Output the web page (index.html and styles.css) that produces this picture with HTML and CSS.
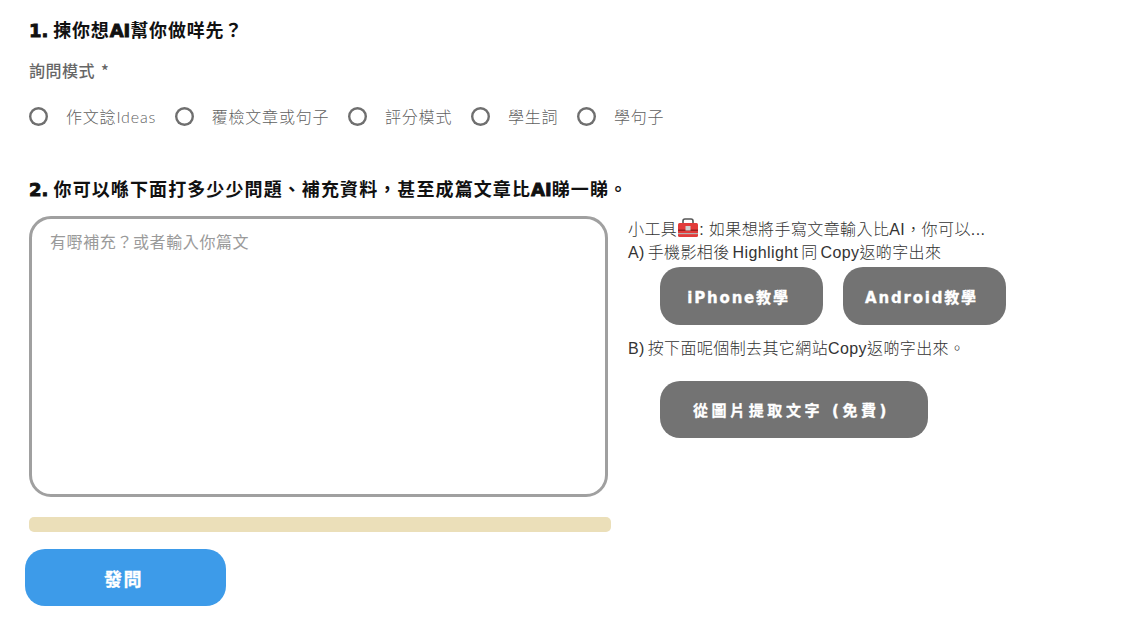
FILE: index.html
```html
<!DOCTYPE html>
<html lang="zh-Hant">

<head>
    <meta charset="UTF-8">
    <meta name="viewport" content="width=device-width, initial-scale=1.0">
    <title>AI</title>
    <link rel="stylesheet" href="styles.css">
</head>

<body>

    <div class="page">
        <h2 class="step step-one"><span class="latin">1.</span> 揀你想<span class="latin">AI</span>幫你做咩先？</h2>
        <p class="field-label">詢問模式 <span class="star">*</span></p>

        <div class="radio-row">
            <label class="radio"><span class="dot"></span>作文諗Ideas</label>
            <label class="radio"><span class="dot"></span>覆檢文章或句子</label>
            <label class="radio"><span class="dot"></span>評分模式</label>
            <label class="radio"><span class="dot"></span>學生詞</label>
            <label class="radio"><span class="dot"></span>學句子</label>
        </div>

        <h2 class="step step-two"><span class="latin">2.</span> 你可以喺下面打多少少問題、補充資料，甚至成篇文章比<span class="latin">AI</span>睇一睇。</h2>

        <div class="columns">
            <div class="left-col">
                <textarea class="question-box" placeholder="有嘢補充？或者輸入你篇文"></textarea>
                <div class="progress"></div>
                <button class="btn btn-send">發問</button>
            </div>

            <div class="tools">
                <p class="tool-line">小工具<svg class="toolbox" viewBox="0 0 22 20" width="22" height="20">
                        <path d="M6 6V3C6 1.8 7 1 8 1h6c1 0 2 .8 2 2v3" fill="none" stroke="#555555" stroke-width="1.6" />
                        <rect x="1" y="5" width="20" height="14" rx="1.5" fill="#e23b3a" />
                        <rect x="1" y="11.5" width="20" height="1.5" fill="#9a2222" />
                        <rect x="1" y="15" width="20" height="1.2" fill="#b5b0b0" />
                        <rect x="8.5" y="8" width="5" height="4.5" fill="#cfcfcf" />
                    </svg>: 如果想將手寫文章輸入比AI，你可以...</p>
                <p class="tool-line tight">A) 手機影相後 Highlight 同 Copy返啲字出來</p>
                <div class="tool-btns">
                    <button class="btn btn-grey btn-small">iPhone教學</button>
                    <button class="btn btn-grey btn-small">Android教學</button>
                </div>
                <p class="tool-line tight line-b">B) 按下面呢個制去其它網站Copy返啲字出來。</p>
                <div class="tool-btns tool-btns-b">
                    <button class="btn btn-grey btn-wide">從圖片提取文字 (免費)</button>
                </div>
            </div>
        </div>
    </div>

</body>

</html>
```

FILE: styles.css
```css
/* General */
body {
    margin: 0;
    background: #ffffff;
    color: #111111;
    font-family: "Noto Sans CJK TC", "Liberation Sans", sans-serif;
}

.page {
    padding: 17px 0 0 29px;
}

/* Headings */
.step {
    margin: 0;
    font-size: 18px;
    line-height: 24px;
    font-weight: 700;
    letter-spacing: 0.8px;
    color: #111111;
}

.latin {
    font-family: "DejaVu Sans", sans-serif;
    font-weight: 700;
    -webkit-text-stroke: 0.9px #111111;
    letter-spacing: 0;
}

.step-two {
    margin-top: 48px;
    letter-spacing: 1.1px;
}

.field-label {
    margin: 15px 0 0;
    font-size: 16px;
    line-height: 24px;
    font-weight: 500;
    letter-spacing: 0.5px;
    color: #666666;
}

.star {
    margin-left: 2px;
}

/* Radios */
.radio-row {
    display: flex;
    gap: 18.7px;
    margin-top: 22px;
    height: 24px;
}

.radio {
    display: flex;
    align-items: center;
    font-family: "Lato", "Noto Sans CJK TC", sans-serif;
    font-size: 16px;
    letter-spacing: 0.8px;
    font-weight: 300;
    color: #5f5f5f;
}

.dot {
    width: 19px;
    height: 19px;
    margin-right: 18px;
    border-radius: 50%;
    box-shadow: inset 0 0 0 2.4px #6f6f6f;
}

/* Two columns */
.columns {
    display: flex;
    margin-top: 14px;
}

.left-col {
    width: 582px;
    flex: none;
}

.question-box {
    display: block;
    box-sizing: border-box;
    width: 579px;
    height: 281px;
    padding: 10px 18px;
    border: 3px solid #a0a0a0;
    border-radius: 22px;
    font-family: inherit;
    font-size: 16px;
    line-height: 24px;
    letter-spacing: 0.6px;
    resize: none;
    outline: none;
}

.question-box::placeholder {
    color: #9a9a9a;
    opacity: 1;
}

.progress {
    height: 15px;
    margin-top: 20px;
    border-radius: 5px;
    background: #ebdfb9;
}

/* Buttons */
.btn {
    border: none;
    border-radius: 20px;
    color: #ffffff;
    font-family: "DejaVu Sans", "Noto Sans CJK TC", sans-serif;
    font-size: 15px;
    font-weight: 700;
    letter-spacing: 1.8px;
    -webkit-text-stroke: 0.3px #ffffff;
}

.btn-send {
    display: block;
    width: 201px;
    height: 57px;
    margin: 17px 0 0 -4px;
    padding-right: 10px;
    font-size: 18px;
    letter-spacing: 1.5px;
    background: #3d9be9;
}

.btn-grey {
    height: 58px;
    padding-right: 12px;
    background: #737373;
}

.btn-small {
    width: 163px;
}

.btn-wide {
    width: 268px;
    height: 57px;
    padding-right: 11px;
    letter-spacing: 3.6px;
}

/* Right column */
.tools {
    margin: 2px 0 0 17px;
}

.tool-line {
    margin: 0;
    font-family: "Liberation Sans", "Noto Sans CJK TC", sans-serif;
    font-size: 16px;
    line-height: 23px;
    font-weight: 300;
    letter-spacing: 0.4px;
    color: #333333;
}

.tight {
    word-spacing: -2px;
}

.toolbox {
    vertical-align: -3px;
}

.tool-btns {
    display: flex;
    gap: 20px;
    margin: 3px 0 0 32px;
}

.line-b {
    margin-top: 12px;
}

.tool-btns-b {
    margin-top: 21px;
}
```
